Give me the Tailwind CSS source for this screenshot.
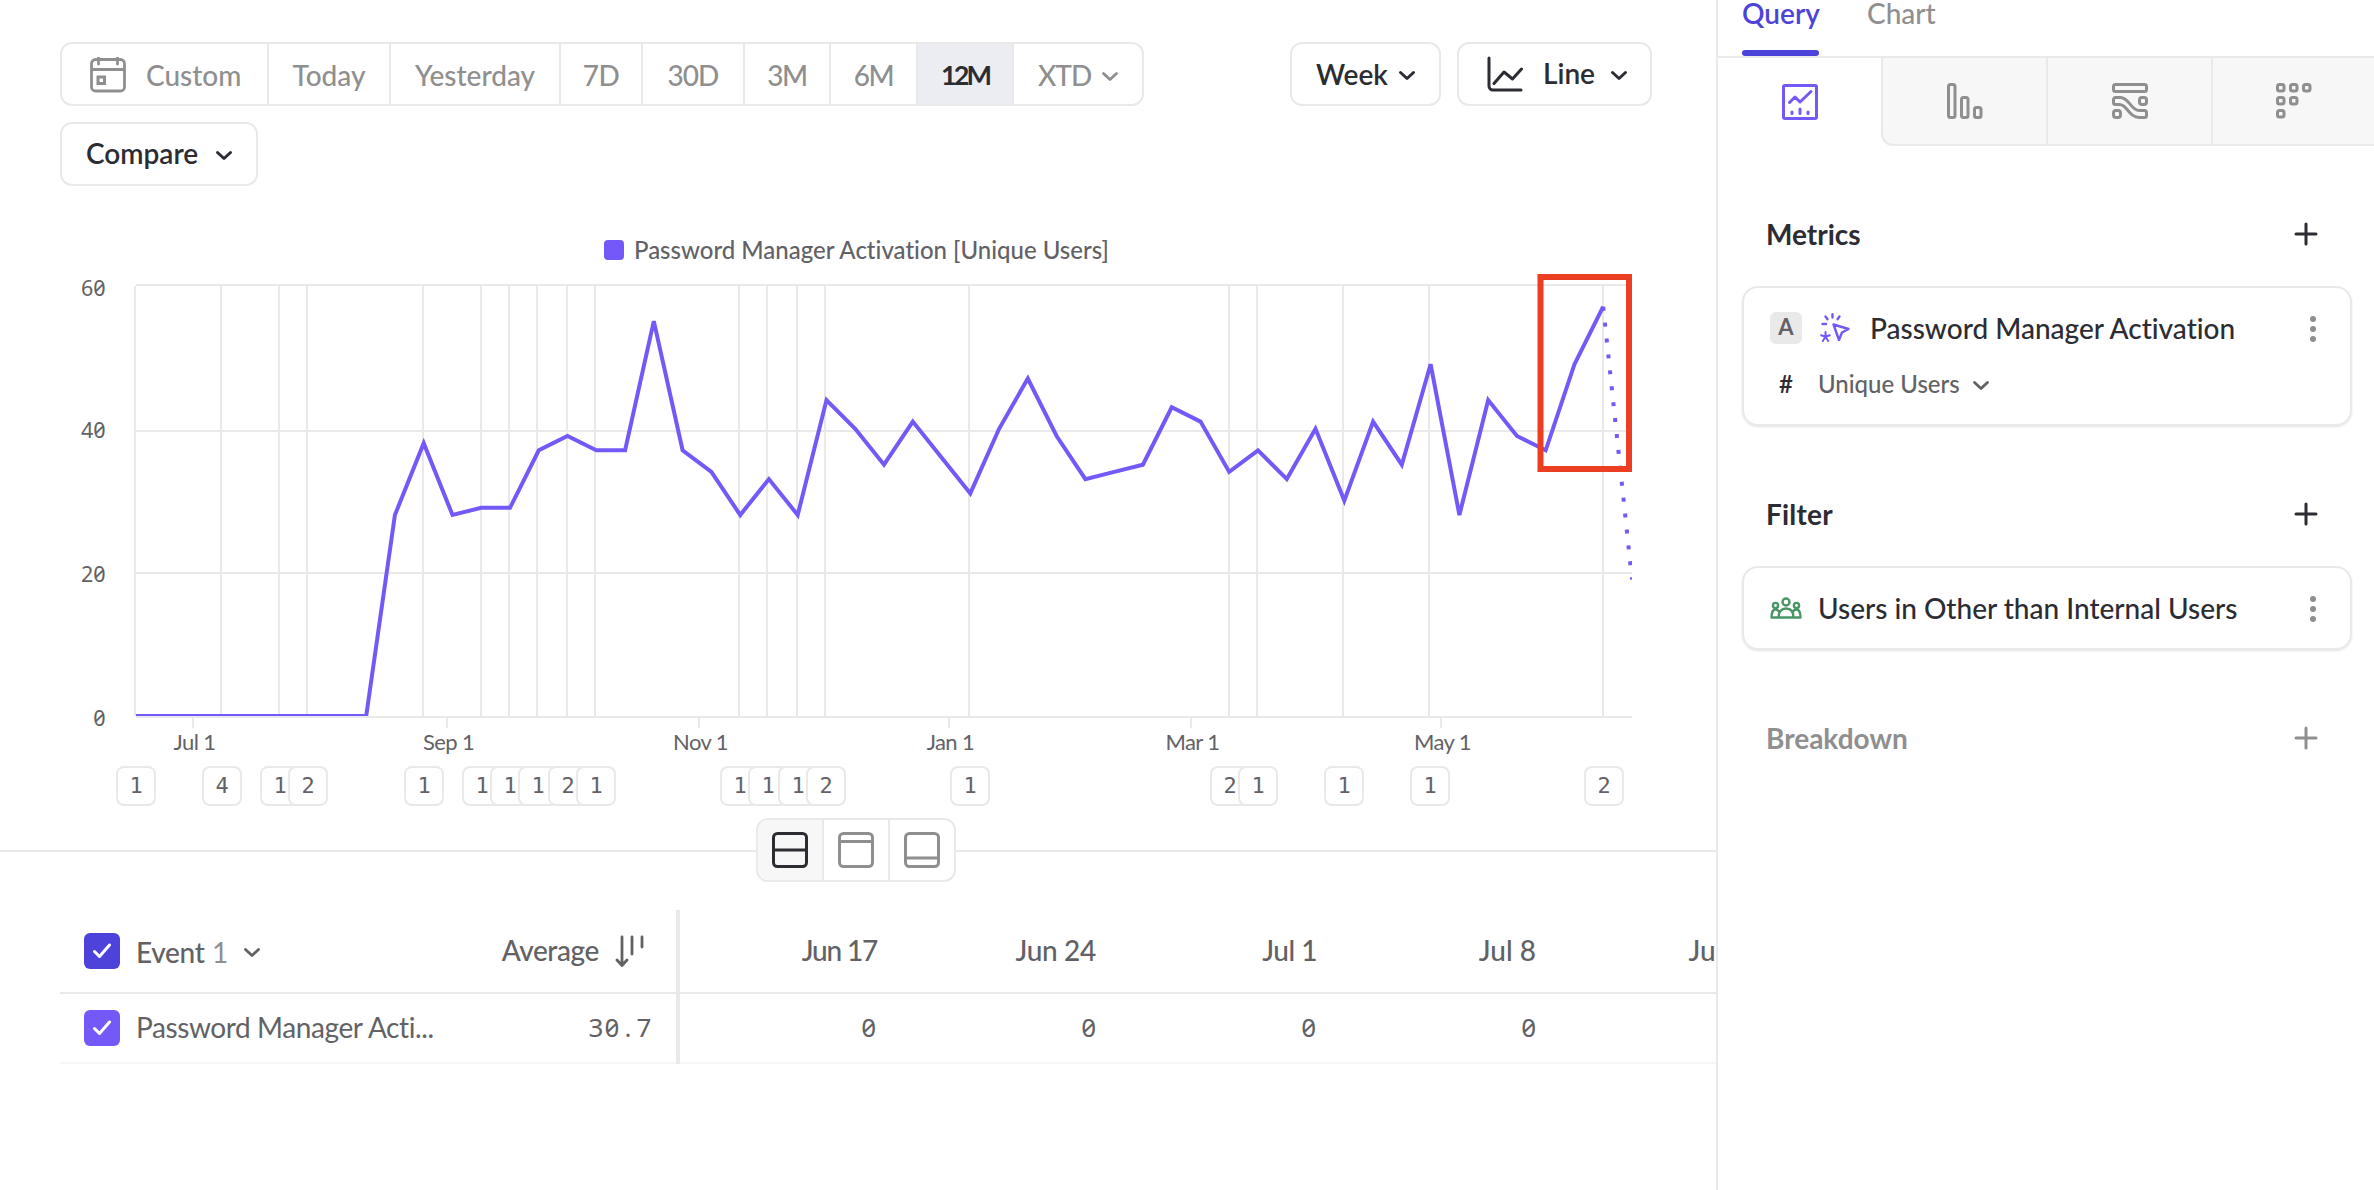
<!DOCTYPE html>
<html lang="en">
<head>
  <meta charset="UTF-8">
  <title>Insights - Password Manager Activation</title>
  <script src="https://cdn.jsdelivr.net/npm/@tailwindcss/browser@4"></script>
</head>
<body class="bg-white w-[2374px] h-[1190px] overflow-hidden flex font-['Lato','Liberation_Sans',sans-serif] text-[28px] leading-8 font-medium text-[#2c2c33] whitespace-nowrap [font-variant-ligatures:none]">

  <main class="w-[1716px] shrink-0 overflow-hidden">
    <section class="h-[852px] border-b-2 border-[#e9e9e9] pt-[42px]">

      <!-- Toolbar -->
      <div class="flex justify-between pl-[60px] pr-16">
        <div class="flex h-16 border-2 border-[#e9e9e9] rounded-xl overflow-hidden text-[#8f8f8f] divide-x-2 divide-[#e9e9e9]">
          <button class="w-[207px] flex items-center pl-7 pt-0.5">
            <svg class="w-9 h-9 mr-[20px]" viewBox="0 0 36 36" fill="none" stroke="currentColor" stroke-width="2.8" stroke-linecap="round">
              <rect x="1.5" y="2.5" width="33" height="31.5" rx="4"/>
              <path d="M2 12.5h32M8.5 1v6M27.5 1v6"/>
              <rect x="8" y="20" width="6.5" height="6.5" stroke-width="3"/>
            </svg>
            <span>Custom</span>
          </button>
          <button class="w-[122px] pt-0.5">Today</button>
          <button class="w-[170px] pt-0.5">Yesterday</button>
          <button class="w-[82px] pt-0.5 tracking-[-0.5px]">7D</button>
          <button class="w-[102px] pt-0.5 tracking-[-1px]">30D</button>
          <button class="w-[86px] pt-0.5 tracking-[-1.5px]">3M</button>
          <button class="w-[87px] pt-0.5 tracking-[-1.5px]">6M</button>
          <button class="w-[96px] pt-0.5 bg-[#ecedf3] text-[#2c2c33] text-[27px] font-bold tracking-[-3px]">12M</button>
          <button class="w-[128px] flex items-center pl-6 pt-0.5 tracking-[-1px]">
            <span class="w-[63px] text-left">XTD</span>
            <svg class="w-[18px] h-3 mt-1" viewBox="0 0 18 12" fill="none" stroke="currentColor" stroke-width="2.8" stroke-linecap="round" stroke-linejoin="round"><path d="M2.5 2.5l6.5 6 6.500-6"/></svg>
          </button>
        </div>

        <div class="flex gap-4">
          <button class="w-[151px] h-16 border-2 border-[#e9e9e9] rounded-xl flex items-center pl-6 font-semibold">
            <span class="w-[82px] text-left -mt-px">Week</span>
            <svg class="w-[18px] h-3 mt-1" viewBox="0 0 18 12" fill="none" stroke="currentColor" stroke-width="3" stroke-linecap="round" stroke-linejoin="round"><path d="M2.5 2.5l6.5 6 6.500-6"/></svg>
          </button>
          <button class="w-[195px] h-16 border-2 border-[#e9e9e9] rounded-xl flex items-center pl-7 font-semibold">
            <svg class="w-9 h-9 mr-5" viewBox="0 0 36 36" fill="none" stroke="currentColor" stroke-width="3" stroke-linecap="round" stroke-linejoin="round">
              <path d="M2 2v28a4 4 0 0 0 4 4h28M7 27.500L17 16l8.500 7L34.500 13"/>
            </svg>
            <span class="w-[67px] text-left -mt-0.5">Line</span>
            <svg class="w-[18px] h-3 mt-1" viewBox="0 0 18 12" fill="none" stroke="currentColor" stroke-width="3" stroke-linecap="round" stroke-linejoin="round"><path d="M2.5 2.5l6.5 6 6.500-6"/></svg>
          </button>
        </div>
      </div>

      <button class="mt-4 ml-[60px] w-[198px] h-16 border-2 border-[#e9e9e9] rounded-xl flex items-center pl-6 font-semibold">
        <span class="w-[129px] text-left -mt-0.5">Compare</span>
        <svg class="w-[18px] h-3 mt-1" viewBox="0 0 18 12" fill="none" stroke="currentColor" stroke-width="3" stroke-linecap="round" stroke-linejoin="round"><path d="M2.5 2.5l6.5 6 6.500-6"/></svg>
      </button>

      <!-- Legend -->
      <div class="mt-12 ml-[604px] h-8 flex items-center gap-[10px] text-2xl leading-8 text-[#626266]">
        <span class="w-5 h-5 rounded bg-[#7558f8]"></span>
        <span>Password Manager Activation [Unique Users]</span>
      </div>

      <svg id="chart" class="block w-[1716px] h-[500px]" viewBox="0 266 1716 500"></svg>

      <!-- Annotation counts under the chart -->
      <div id="badges" class="relative h-10"></div>
    </section>

    <!-- Split view switch -->
    <div class="relative -mt-[34px] ml-[756px] w-[200px] h-16 flex bg-white border-2 border-[#e9e9e9] rounded-xl overflow-hidden divide-x-2 divide-[#e9e9e9] text-[#8f8f8f]">
      <button class="w-[66px] flex items-center justify-center bg-[#f7f7f7] text-[#2c2c33]">
        <svg class="w-9 h-9" viewBox="0 0 36 36" fill="none" stroke="currentColor" stroke-width="3"><rect x="1.5" y="1.5" width="33" height="33" rx="4"/><path d="M1.5 18h33"/></svg>
      </button>
      <button class="w-[66px] flex items-center justify-center">
        <svg class="w-9 h-9" viewBox="0 0 36 36" fill="none" stroke="currentColor" stroke-width="3"><rect x="1.5" y="1.5" width="33" height="33" rx="4"/><path d="M1.5 9.5h33"/></svg>
      </button>
      <button class="w-[64px] flex items-center justify-center">
        <svg class="w-9 h-9 shrink-0" viewBox="0 0 36 36" fill="none" stroke="currentColor" stroke-width="3"><rect x="1.5" y="1.5" width="33" height="33" rx="4"/><path d="M1.5 26h33"/></svg>
      </button>
    </div>

    <!-- Table -->
    <div class="mt-7 ml-[60px] flex text-[#626266]">
      <div class="w-[620px] shrink-0 border-r-4 border-[#e9e9e9]">
        <div class="h-[84px] border-b-2 border-[#e9e9e9] flex items-center pl-6">
          <span class="w-9 h-9 rounded-md bg-[#4d43db] flex items-center justify-center">
            <svg class="w-5 h-4" viewBox="0 0 20 16" fill="none" stroke="white" stroke-width="3" stroke-linecap="round" stroke-linejoin="round"><path d="M2.5 8.5l5 5L17.5 2"/></svg>
          </span>
          <span class="ml-4 mt-0.5 w-[76px] tracking-[-0.3px]">Event</span>
          <span class="mt-0.5 w-[30px] text-[#8f8f8f] font-normal">1</span>
          <svg class="w-[18px] h-3 mt-1 ml-px" viewBox="0 0 18 12" fill="none" stroke="currentColor" stroke-width="2.8" stroke-linecap="round" stroke-linejoin="round"><path d="M2.5 2.5l6.5 6 6.500-6"/></svg>
          <span class="ml-auto -mt-0.5 tracking-[-0.4px]">Average</span>
          <svg class="w-[30px] h-8 ml-4 mr-[31px]" viewBox="0 0 30 32" fill="none" stroke="currentColor" stroke-width="2.8" stroke-linecap="round" stroke-linejoin="round"><path d="M7 2v28M2 25l5 5.500 5-5.500M17 2v17M27 2v10"/></svg>
        </div>
        <div class="h-[70px] border-b-2 border-[#f5f5f5] flex items-center pl-6">
          <span class="w-9 h-9 rounded-md bg-[#7558f8] flex items-center justify-center">
            <svg class="w-5 h-4" viewBox="0 0 20 16" fill="none" stroke="white" stroke-width="3" stroke-linecap="round" stroke-linejoin="round"><path d="M2.5 8.5l5 5L17.5 2"/></svg>
          </span>
          <span class="ml-4 -mt-0.5 font-normal tracking-[-0.4px]">Password Manager Acti...</span>
          <span class="ml-auto mr-6 -mt-0.5 font-normal font-['Noto_Sans',sans-serif] text-[26px] slashed-zero flex text-center">
            <span class="w-4">3</span><span class="w-4">0</span><span class="w-4">.</span><span class="w-4">7</span>
          </span>
        </div>
      </div>
      <div class="flex">
        <div class="w-[220px] shrink-0 text-right">
          <div class="h-[84px] border-b-2 border-[#e9e9e9] flex items-center justify-end pr-[23px] pb-0.5 tracking-[-1.2px]">Jun 17</div>
          <div class="h-[70px] border-b-2 border-[#f5f5f5] flex items-center justify-end pr-6 pb-0.5 font-normal font-['Noto_Sans',sans-serif] text-[26px] slashed-zero">0</div>
        </div>
        <div class="w-[220px] shrink-0 text-right">
          <div class="h-[84px] border-b-2 border-[#e9e9e9] flex items-center justify-end pr-6 pb-0.5 tracking-[-0.3px]">Jun 24</div>
          <div class="h-[70px] border-b-2 border-[#f5f5f5] flex items-center justify-end pr-6 pb-0.5 font-normal font-['Noto_Sans',sans-serif] text-[26px] slashed-zero">0</div>
        </div>
        <div class="w-[220px] shrink-0 text-right">
          <div class="h-[84px] border-b-2 border-[#e9e9e9] flex items-center justify-end pr-[23px] pb-0.5 tracking-[-0.5px]">Jul 1</div>
          <div class="h-[70px] border-b-2 border-[#f5f5f5] flex items-center justify-end pr-6 pb-0.5 font-normal font-['Noto_Sans',sans-serif] text-[26px] slashed-zero">0</div>
        </div>
        <div class="w-[220px] shrink-0 text-right">
          <div class="h-[84px] border-b-2 border-[#e9e9e9] flex items-center justify-end pr-6 pb-0.5">Jul 8</div>
          <div class="h-[70px] border-b-2 border-[#f5f5f5] flex items-center justify-end pr-6 pb-0.5 font-normal font-['Noto_Sans',sans-serif] text-[26px] slashed-zero">0</div>
        </div>
        <div class="w-[220px] shrink-0 text-right">
          <div class="h-[84px] border-b-2 border-[#e9e9e9] flex items-center justify-end pr-[18px] pb-0.5">Jul 15</div>
          <div class="h-[70px] border-b-2 border-[#f5f5f5]"></div>
        </div>
      </div>
    </div>
  </main>

  <aside class="w-[658px] shrink-0 border-l-2 border-[#e9e9e9]">
    <div class="h-[58px] border-b-2 border-[#e9e9e9] flex pl-6 text-[#8f8f8f]">
      <div class="w-[77px] flex flex-col justify-between text-[#4d43db]">
        <span class="leading-[26px] font-semibold">Query</span>
        <span class="h-1.5 rounded-full bg-[#4d43db]"></span>
      </div>
      <span class="ml-12 leading-[26px]">Chart</span>
    </div>

    <!-- Report types -->
    <div class="flex h-[88px] text-[#8f8f8f]">
      <div class="w-[163px] flex items-center justify-center text-[#7558f8]">
        <svg class="w-9 h-9" viewBox="0 0 36 36" fill="none" stroke="currentColor" stroke-width="3" stroke-linecap="round" stroke-linejoin="round">
          <rect x="1.5" y="1.5" width="33" height="33" rx="1.5"/>
          <path d="M7.5 18.500l5.500-5.500 5 5L29 7.500M10 28v1.500M18 25v4.500M26 28v1.500"/>
        </svg>
      </div>
      <div class="flex-1 flex bg-[#f7f7f7] border-l-2 border-b-2 border-[#e9e9e9] rounded-bl-xl divide-x-2 divide-[#e9e9e9]">
        <div class="w-[165px] flex items-center justify-center">
          <svg class="w-9 h-9" viewBox="0 0 36 36" fill="none" stroke="currentColor" stroke-width="3"><rect x="1.5" y="1.5" width="6.5" height="33" rx="2"/><rect x="14.5" y="14.5" width="6.5" height="20" rx="2"/><rect x="27.5" y="24.5" width="6.5" height="10" rx="2"/></svg>
        </div>
        <div class="w-[165px] flex items-center justify-center">
          <svg class="w-9 h-9" viewBox="0 0 36 36" fill="none" stroke="currentColor" stroke-width="3">
            <rect x="1.5" y="1.5" width="33" height="7" rx="2"/>
            <rect x="27.5" y="14.5" width="7" height="7" rx="2.5"/>
            <rect x="1.5" y="27.5" width="7" height="7" rx="2.5"/>
            <path d="M3.500 14.500h5c8.500 0 10.500 13 18.500 13h5.500a2 2 0 0 1 2 2v3a2 2 0 0 1-2 2h-5c-11 0-12-13-20-13h-4a2 2 0 0 1-2-2v-3a2 2 0 0 1 2-2z"/>
          </svg>
        </div>
        <div class="flex-1 flex items-center pl-[63px]">
          <svg class="w-9 h-9" viewBox="0 0 36 36" fill="none" stroke="currentColor" stroke-width="3"><rect x="1.5" y="1.5" width="6.5" height="6.5" rx="2"/><rect x="14.5" y="1.5" width="6.5" height="6.5" rx="2"/><rect x="27.5" y="1.5" width="6.5" height="6.5" rx="2"/><rect x="1.5" y="14.5" width="6.5" height="6.5" rx="2"/><rect x="14.5" y="14.5" width="6.5" height="6.5" rx="2"/><rect x="1.5" y="27.5" width="6.5" height="6.5" rx="2"/></svg>
        </div>
      </div>
    </div>

    <div class="pl-6 pr-[22px]">
      <div class="mt-[72px] h-8 flex items-center justify-between pl-6 pr-[34px] font-bold">
        <span class="-mt-px">Metrics</span>
        <svg class="w-6 h-6" viewBox="0 0 24 24" fill="none" stroke="currentColor" stroke-width="3" stroke-linecap="round"><path d="M12 2v20M2 12h20"/></svg>
      </div>

      <div class="mt-9 h-[140px] border-2 border-[#e9e9e9] rounded-2xl shadow-[0_1px_2px_rgba(0,0,0,0.12)] pl-[26px] pr-[34px]">
        <div class="mt-6 h-8 flex items-center">
          <span class="w-8 h-8 rounded-md bg-[#e9e9e9] text-[#626266] text-[22px] font-bold flex items-center justify-center pb-0.5">A</span>
          <svg class="w-[30px] h-[30px] ml-[18px]" viewBox="0 0 30 30" fill="none" stroke="#7558f8" stroke-width="2.4" stroke-linecap="round" stroke-linejoin="round">
            <path d="M13.500 11.500l15 4.500-6.500 3.500-3 7.500zM12.500 1.200v3.300M5.500 3.500l2 2.800M19.500 3.500l-2 2.800M2.500 11h3.500"/>
            <path d="M5.500 19v4.800M1.200 22.300l4.300 1.500 4.300-1.500M2.800 28l2.700-4.200 2.700 4.200" stroke-width="2"/>
          </svg>
          <span class="ml-5">Password Manager Activation</span>
          <svg class="w-1.5 h-[26px] ml-auto mt-0.5" viewBox="0 0 6 26" fill="#8f8f8f"><circle cx="3" cy="3" r="3"/><circle cx="3" cy="13" r="3"/><circle cx="3" cy="23" r="3"/></svg>
        </div>
        <div class="mt-6 h-8 flex items-center text-2xl leading-8 text-[#626266]">
          <span class="w-8 text-center font-semibold text-[#2c2c33]">#</span>
          <span class="ml-4 w-[154px]">Unique Users</span>
          <svg class="w-[18px] h-3 mt-1" viewBox="0 0 18 12" fill="none" stroke="currentColor" stroke-width="2.8" stroke-linecap="round" stroke-linejoin="round"><path d="M2.5 2.5l6.5 6 6.500-6"/></svg>
        </div>
      </div>

      <div class="mt-[72px] h-8 flex items-center justify-between pl-6 pr-[34px] font-bold">
        <span class="tracking-[0.2px]">Filter</span>
        <svg class="w-6 h-6" viewBox="0 0 24 24" fill="none" stroke="currentColor" stroke-width="3" stroke-linecap="round"><path d="M12 2v20M2 12h20"/></svg>
      </div>

      <div class="mt-9 h-[84px] border-2 border-[#e9e9e9] rounded-2xl shadow-[0_1px_2px_rgba(0,0,0,0.12)] pl-[26px] pr-[34px] flex items-center">
        <svg class="w-8 h-[22px]" viewBox="0 0 32 22" fill="none" stroke="#4a9565" stroke-width="2.4" stroke-linecap="round" stroke-linejoin="round">
          <circle cx="16" cy="5" r="3.5"/><circle cx="5.5" cy="8.5" r="2.6"/><circle cx="26.5" cy="8.5" r="2.6"/>
          <path d="M8.500 20.500c0-6 3-9 7.500-9s7.500 3 7.500 9zM8.500 20.500H1.500c0-5 1.500-8 4-8 1.800 0 3 1 4 2.500M23.500 20.500h7c0-5-1.500-8-4-8-1.800 0-3 1-4 2.500"/>
        </svg>
        <span class="ml-4">Users in Other than Internal Users</span>
        <svg class="w-1.5 h-[26px] ml-auto mt-px" viewBox="0 0 6 26" fill="#8f8f8f"><circle cx="3" cy="3" r="3"/><circle cx="3" cy="13" r="3"/><circle cx="3" cy="23" r="3"/></svg>
      </div>

      <div class="mt-[72px] h-8 flex items-center justify-between pl-6 pr-[34px] font-bold text-[#8f8f8f]">
        <span>Breakdown</span>
        <svg class="w-6 h-6" viewBox="0 0 24 24" fill="none" stroke="currentColor" stroke-width="3" stroke-linecap="round"><path d="M12 2v20M2 12h20"/></svg>
      </div>
    </div>
  </aside>

  <script>
    const weeks = [0,0,0,0,0,0,0,0,0,28,38,28,29,29,37,39,37,37,55,37,34,28,33,28,44,40,35,41,36,31,40,47,39,33,34,35,43,41,34,37,33,40,30,41,35,49,28,44,39,37,49,57,19];
    const annotations = [[135,1],[221,4],[279,1],[307,2],[423,1],[481,1],[509,1],[537,1],[567,2],[595,1],[739,1],[767,1],[797,1],[825,2],[969,1],[1229,2],[1257,1],[1343,1],[1429,1],[1603,2]];
    const months = [['Jul 1',193],['Sep 1',447],['Nov 1',699],['Jan 1',949],['Mar 1',1191],['May 1',1441]];

    const x = i => 136 + i * (1496 / 52);
    const y = v => 716 - v * 7.18;
    const points = weeks.map((v, i) => `${x(i).toFixed(1)},${y(v).toFixed(1)}`);

    let svg = '<g stroke="#e9e9e9" stroke-width="2">';
    [285, 431, 573, 717].forEach(g => svg += `<path d="M136 ${g}H1632"/>`);
    annotations.forEach(a => svg += `<path d="M${a[0]} 286V716"/>`);
    months.forEach(m => svg += `<path d="M${m[1]} 718v10"/>`);
    svg += '</g>';

    svg += `<g fill="#626266" font-size="21.5" font-family="Noto Sans, sans-serif" text-anchor="end" class="slashed-zero font-normal">
      <text x="105.5" y="296">60</text><text x="105.5" y="438">40</text><text x="105.5" y="582">20</text><text x="105.5" y="726">0</text></g>`;
    svg += '<g fill="#626266" font-size="22" text-anchor="middle" letter-spacing="-0.6" class="font-normal">';
    months.forEach(m => svg += `<text x="${m[1] + 1.5}" y="750">${m[0]}</text>`);
    svg += '</g>';

    svg += `<clipPath id="plot"><path d="M136 280H1632V716H136z"/></clipPath>
      <g clip-path="url(#plot)" fill="none" stroke="#7558f8" stroke-width="4">
        <polyline points="${points.slice(0, 52).join(' ')}"/>
        <polyline points="${points.slice(51).join(' ')}" stroke-dasharray="4 12"/>
      </g>
      <rect x="1540.5" y="277" width="88.5" height="192" fill="none" stroke="#ec3e22" stroke-width="6"/>`;
    document.getElementById('chart').innerHTML = svg;

    document.getElementById('badges').innerHTML = annotations.map(a =>
      `<span class="absolute top-0 w-10 h-10 rounded-lg border-2 border-[#e9e9e9] bg-white flex items-center justify-center font-normal font-['DejaVu_Sans_Mono',monospace] text-[22px] text-[#626266]" style="left:${a[0] - 19}px">${a[1]}</span>`
    ).join('');
  </script>
</body>
</html>
